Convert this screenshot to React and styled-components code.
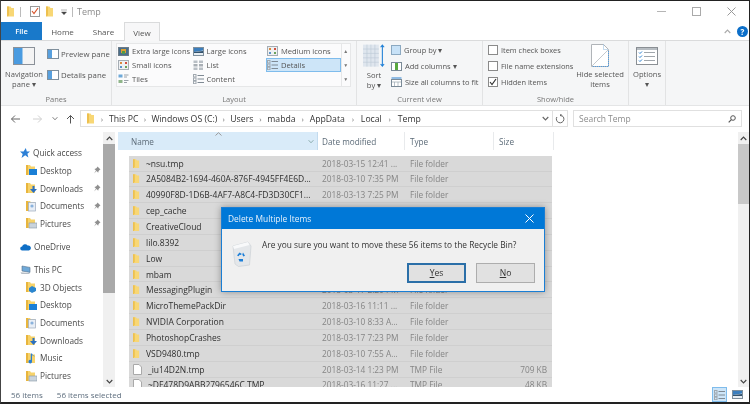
import { Fragment } from "react";
import styled, { createGlobalStyle } from "styled-components";

const GlobalStyle = createGlobalStyle`
  html, body {
    margin: 0;
    padding: 0;
    background: #fff;
  }
  body {
    font-family: "Open Sans", "Noto Sans", sans-serif;
    font-size: 8.5px;
    color: #444;
  }
`;

const Window = styled.div`
  position: relative;
  width: 750px;
  height: 404px;
  box-sizing: border-box;
  border-top: 1px solid #222;
  border-left: 1px solid #444;
  border-right: 1px solid #222;
  border-bottom: 2px solid #222;
  display: flex;
  flex-direction: column;
  overflow: hidden;
  background: #fff;
  filter: blur(0.3px);
`;

/* title bar */
const TitleBar = styled.div`
  height: 21px;
  display: flex;
  align-items: center;
  padding-left: 6px;
  flex: none;
`;

const TitleSep = styled.span`
  width: 1px;
  height: 10px;
  background: #bbb;
  margin: ${(p) => p.$margin};
`;

const QuickSlot = styled.span`
  display: flex;
  margin-left: ${(p) => p.$ml}px;
`;

const TitleText = styled.span`
  font-size: 9px;
  color: #8c8c8c;
`;

const WindowControls = styled.div`
  margin-left: auto;
  display: flex;
  align-items: center;
  gap: 26px;
  padding-right: 13px;
`;

/* tabs */
const TabRow = styled.div`
  height: 18px;
  display: flex;
  align-items: stretch;
  flex: none;
  position: relative;
`;

const FileTab = styled.div`
  width: 41px;
  background: #1979ca;
  color: #fff;
  display: flex;
  align-items: center;
  justify-content: center;
  font-weight: 600;
  font-size: 7.5px;
`;

const Tab = styled.div`
  width: ${(p) => p.$w}px;
  display: flex;
  align-items: center;
  justify-content: center;
  color: #555;
  font-size: 8px;
  box-sizing: border-box;
  ${(p) =>
    p.$active &&
    `
    background: #f7f7f8;
    border: 1px solid #dadbdc;
    border-bottom: none;
    margin-bottom: -1px;
    z-index: 1;
  `}
`;

const TabRight = styled.div`
  margin-left: auto;
  display: flex;
  align-items: center;
  gap: 6px;
  padding-right: 1px;
`;

const HelpDot = styled.span`
  width: 11px;
  height: 11px;
  border-radius: 50%;
  background: #0c6fc9;
  color: #fff;
  font-size: 8px;
  font-weight: 700;
  display: flex;
  align-items: center;
  justify-content: center;
`;

/* ribbon */
const Ribbon = styled.div`
  height: 66px;
  flex: none;
  display: flex;
  background: #f5f6f7;
  border-top: 1px solid #dadbdc;
  border-bottom: 1px solid #e4e5e6;
  box-sizing: border-box;
`;

const Group = styled.div`
  width: ${(p) => p.$w}px;
  flex: none;
  box-sizing: border-box;
  border-right: 1px solid #e2e3e4;
  display: flex;
  flex-direction: column;
`;

const GroupBody = styled.div`
  height: 52px;
  display: flex;
  padding: ${(p) => p.$pad || "0"};
  box-sizing: border-box;
`;

const GroupLabel = styled.div`
  text-align: center;
  font-size: 7.5px;
  color: #777;
  line-height: 12px;
`;

const BigButton = styled.div`
  width: ${(p) => p.$w}px;
  display: flex;
  flex-direction: column;
  align-items: center;
  font-size: 7.6px;
  line-height: 10px;
  text-align: center;
  color: #555;
  flex: none;
  padding-top: ${(p) => p.$top || 6}px;
  box-sizing: border-box;
  white-space: nowrap;

  svg {
    margin-bottom: ${(p) => p.$gap ?? 4}px;
  }
`;

const SmallStack = styled.div`
  width: ${(p) => (p.$w ? `${p.$w}px` : "auto")};
  flex: none;
  display: flex;
  flex-direction: column;
  gap: ${(p) => p.$gap}px;
  padding-top: ${(p) => p.$top}px;
`;

const SmallItem = styled.div`
  display: flex;
  align-items: center;
  gap: ${(p) => p.$gap ?? 3}px;
  height: 12px;
  white-space: nowrap;
  font-size: ${(p) => p.$size || 7.8}px;
  color: #555;
`;

const Gallery = styled.div`
  width: 235px;
  height: 44px;
  margin: 2px 0 0 4px;
  display: flex;
  background: #fbfbfc;
  border: 1px solid #e6e7e8;
  box-sizing: border-box;
`;

const GalleryGrid = styled.div`
  flex: 1;
  display: grid;
  grid-template-columns: 74.5px 74.5px 74.5px;
  grid-auto-rows: 14px;
`;

const GalleryItem = styled.div`
  display: flex;
  align-items: center;
  gap: 3px;
  padding-left: 1px;
  font-size: 7.6px;
  color: #555;
  white-space: nowrap;
  box-sizing: border-box;
  ${(p) => p.$active && `background: #cde5f8; border: 1px solid #7fbcec; padding-left: 0;`}
`;

const GalleryScroll = styled.div`
  width: 9px;
  border-left: 1px solid #e6e7e8;
  color: #777;
  font-size: 5px;
  display: flex;
  flex-direction: column;
  align-items: center;
  justify-content: space-around;
`;

const Check = styled.span`
  width: 8px;
  height: 8px;
  border: 1px solid #8a8a8a;
  background: #fff;
  display: inline-flex;
  align-items: center;
  justify-content: center;
`;

/* address */
const AddressBar = styled.div`
  height: 26px;
  flex: none;
  display: flex;
  align-items: center;
  padding: 0 0 1px 9px;
  box-sizing: border-box;
`;

const NavArrows = styled.div`
  width: 70px;
  flex: none;
  display: flex;
  align-items: center;
`;

const NavSlot = styled.span`
  display: flex;
  margin-left: ${(p) => p.$ml || 0}px;
`;

const AddressBox = styled.div`
  width: 473px;
  height: 17px;
  flex: none;
  display: flex;
  align-items: center;
  padding: 0 3px 0 6px;
  box-sizing: border-box;
  border: 1px solid #e0e0e0;
  color: #333;
  font-size: 8.7px;
`;

const Crumb = styled.span`
  white-space: nowrap;
`;

const CrumbArrow = styled.span`
  width: ${(p) => p.$w}px;
  flex: none;
  color: #777;
  font-size: 8px;
  text-align: center;
`;

const AddressEnd = styled.span`
  margin-left: auto;
  display: flex;
  align-items: center;
`;

const RefreshBox = styled.div`
  width: 15px;
  height: 17px;
  flex: none;
  box-sizing: border-box;
  border: 1px solid #e0e0e0;
  border-left: none;
  display: flex;
  align-items: center;
  justify-content: center;
`;

const SearchBox = styled.div`
  width: 169px;
  height: 17px;
  margin-left: 5px;
  border: 1px solid #e0e0e0;
  box-sizing: border-box;
  display: flex;
  align-items: center;
  justify-content: space-between;
  padding: 0 5px;
  color: #8c8c8c;
  font-size: 8.5px;
  flex: none;
`;

/* main */
const Main = styled.div`
  flex: 1;
  min-height: 0;
  display: flex;
`;

const NavPane = styled.div`
  width: 102px;
  flex: none;
  padding-top: 12px;
  box-sizing: border-box;
  overflow: hidden;
`;

const NavItem = styled.div`
  height: 17.65px;
  display: flex;
  align-items: center;
  padding-left: ${(p) => (p.$top ? 19 : 25)}px;
  gap: ${(p) => (p.$top ? 3 : 3)}px;
  margin-top: ${(p) => p.$space || 0}px;
  font-size: 8.25px;
  color: #4a4a4a;
  white-space: nowrap;

  svg:last-child:not(:first-child) {
    margin-left: auto;
    margin-right: 2px;
  }
`;

const Scrollbar = styled.div`
  width: ${(p) => p.$w}px;
  flex: none;
  background: #f0f0f0;
  display: flex;
  flex-direction: column;
  align-items: center;
`;

const ScrollArrow = styled.div`
  height: 12px;
  flex: none;
  display: flex;
  align-items: center;
  justify-content: center;
  margin-top: ${(p) => (p.$bottom ? "auto" : 0)};
`;

const ScrollThumb = styled.div`
  width: 100%;
  height: ${(p) => p.$h}px;
  background: ${(p) => p.$color};
  flex: none;
`;

const Content = styled.div`
  flex: 1;
  min-width: 0;
  display: flex;
  flex-direction: column;
  padding-left: 3px;
  overflow: hidden;
`;

const HeaderRow = styled.div`
  height: 18px;
  flex: none;
  display: flex;
  position: relative;
`;

const HeaderCell = styled.div`
  width: ${(p) => p.$w}px;
  flex: none;
  box-sizing: border-box;
  display: flex;
  align-items: center;
  padding-left: ${(p) => p.$pad}px;
  font-size: 8.2px;
  color: #5c6b78;
  border-right: 1px solid #e8eaec;
  ${(p) => p.$active && `background: #d9ebf9; border-right: 1px solid #c3dbee;`}
`;

const HeaderDrop = styled.span`
  margin-left: auto;
  padding-right: 3px;
  display: flex;
`;

const SortCaret = styled.span`
  position: absolute;
  left: 97px;
  top: 0;
  line-height: 0;
`;

const Rows = styled.div`
  flex: 1;
  min-height: 0;
  overflow: hidden;
  margin: 5.7px 0 0 11px;
  width: 423px;
`;

const Row = styled.div`
  height: 15.85px;
  box-sizing: border-box;
  display: grid;
  grid-template-columns: 189px 88px 1fr auto;
  align-items: center;
  background: #d9d9d9;
  border-bottom: 1px solid #cfcfcf;
  padding: 0 5px 0 4px;
  font-size: 8.5px;
  white-space: nowrap;
`;

const NameCell = styled.div`
  display: flex;
  align-items: center;
  gap: 6px;
  color: #2f2f2f;
`;

const MutedCell = styled.div`
  color: #858585;
  font-size: 8.3px;
`;

/* status */
const StatusBar = styled.div`
  height: 15px;
  flex: none;
  display: flex;
  align-items: center;
  padding-left: 10px;
  font-size: 8px;
  color: #5f6f7f;
`;

const StatusItem = styled.span`
  margin-right: ${(p) => p.$gap || 0}px;
`;

const ViewSwitch = styled.div`
  margin-left: auto;
  display: flex;
  align-items: center;
  gap: 3px;
  padding-right: 4px;
`;

const ViewButton = styled.span`
  width: 15px;
  height: 15px;
  box-sizing: border-box;
  display: flex;
  align-items: center;
  justify-content: center;
  ${(p) => p.$active && `background: #cde5f8; border: 1px solid #7fbcec;`}
`;

/* dialog */
const Dialog = styled.div`
  position: absolute;
  left: 220px;
  top: 206px;
  width: 324px;
  height: 85px;
  box-sizing: border-box;
  border: 1px solid #1a7ed4;
  background: #f0f0f0;
  box-shadow: 0 0 7px rgba(0, 0, 0, 0.35);
  display: flex;
  flex-direction: column;
`;

const DialogTitle = styled.div`
  height: 21px;
  flex: none;
  background: #0078d7;
  color: #e6f1fb;
  display: flex;
  align-items: center;
  justify-content: space-between;
  padding: 0 10px 0 6px;
  font-size: 8.4px;
`;

const DialogBody = styled.div`
  height: 34px;
  flex: none;
  box-sizing: border-box;
  display: flex;
  padding: 6px 0 0 10px;
  gap: 10px;
  color: #333;
  font-size: 8.35px;
  line-height: 20px;
  white-space: nowrap;

  svg {
    margin-top: 6px;
    flex: none;
  }
`;

const DialogActions = styled.div`
  display: flex;
  justify-content: flex-end;
  gap: 10px;
  padding-right: 9px;
`;

const DialogButton = styled.div`
  width: 59px;
  height: 20px;
  box-sizing: border-box;
  background: #e1e1e1;
  display: flex;
  align-items: center;
  justify-content: center;
  color: #333;
  font-size: 8.6px;
  border: ${(p) => (p.$primary ? "2px solid #2b6fa8" : "1px solid #adadad")};

  u {
    text-underline-offset: 1px;
  }
`;

/* icons */
const Folder = ({ w = 7, h = 11 }) => (
  <svg width={w} height={h} viewBox="0 0 8 11">
    <path d="M0 0.5h3.5l1 1.5H7v8.5H1z" fill="#f8d775" />
    <path d="M0 0.5h2V9l-1 1.5H0z" fill="#edc04f" />
  </svg>
);

const FileIcon = () => (
  <svg width="9" height="11" viewBox="0 0 9 11">
    <path d="M0.5 0.5h5.5l2.5 2.5v7.5h-8z" fill="#fff" stroke="#a9a9a9" />
  </svg>
);

const NavFolder = ({ badge }) => (
  <svg width="11" height="12" viewBox="0 0 11 12">
    <path d="M0 1h4l1 1.5h4V11H0z" fill="#f6d26a" />
    <path d="M0 1h2v10H0z" fill="#e8b53d" />
    {badge === "desktop" && <rect x="3" y="5" width="8" height="6" fill="#1a7fd6" />}
    {badge === "down" && <path d="M6.5 4v3H4l3.5 4 3.5-4H8.5V4z" fill="#2a6fc0" />}
    {badge === "doc" && <rect x="2.5" y="2.5" width="7" height="8.5" fill="#e8eef6" stroke="#9aa9bb" strokeWidth="0.7" />}
    {badge === "doc" && <circle cx="6" cy="6" r="1.6" fill="#8ab2dc" />}
    {badge === "pic" && <rect x="3" y="6" width="8" height="5" fill="#c9d3dc" stroke="#8596a6" strokeWidth="0.6" />}
    {badge === "3d" && <path d="M6 5l4 2v3l-4 2-3-2V7z" fill="#2a86d0" />}
    {badge === "music" && <path d="M6 3v6.5a1.8 1.8 0 1 1-1.2-1.6V1.5h1.2c.3 1.5 2 2 3 3.2-1-.5-2-1-3-1.7z" fill="#2a7fd2" />}
  </svg>
);

const Pin = () => (
  <svg width="8" height="8" viewBox="0 0 8 8">
    <path d="M4.5 0.5l3 3-1 .6-1 1.2-.3 1.5L3.6 5 1 7.5 3 4.4 1.4 3 3 2.6l1-1z" fill="#8f8f8f" />
  </svg>
);

const Star = () => (
  <svg width="10" height="10" viewBox="0 0 10 10">
    <path d="M5.8 0l1 3.5H10L7.4 5.7l1 3.8L5.2 7.3 1.5 10l1.2-4L0 3.6h3.6z" fill="#2b7fd6" />
  </svg>
);

const Cloud = () => (
  <svg width="11" height="8" viewBox="0 0 11 8">
    <path d="M2.3 7.5a2 2 0 0 1-.2-4A3 3 0 0 1 7.6 2.6 2.5 2.5 0 0 1 9 7.5z" fill="#0f6fc6" />
  </svg>
);

const Pc = () => (
  <svg width="11" height="10" viewBox="0 0 11 10">
    <path d="M2 1l8 1.4v5L2 6z" fill="#6fa9d8" stroke="#55708a" strokeWidth="0.6" />
    <path d="M0.5 7.2l8.5.8 1 1H1.5z" fill="#b7bec6" />
  </svg>
);

const Chevron = ({ up, color = "#555", w = 7 }) => (
  <svg width={w} height="5" viewBox="0 0 7 5">
    <path d={up ? "M0.7 4L3.5 1l2.8 3" : "M0.7 1L3.5 4l2.8-3"} fill="none" stroke={color} strokeWidth="1.1" />
  </svg>
);

const Arrow = ({ dir, color }) => (
  <svg width="11" height="10" viewBox="0 0 11 10">
    {dir === "left" && <path d="M10 5H1.5M5 1.5L1.5 5 5 8.5" fill="none" stroke={color} strokeWidth="1" />}
    {dir === "right" && <path d="M1 5h8.5M6 1.5L9.5 5 6 8.5" fill="none" stroke={color} strokeWidth="1" />}
    {dir === "up" && <path d="M5.5 9.5V1.5M2 5l3.5-3.5L9 5" fill="none" stroke={color} strokeWidth="1" />}
  </svg>
);

const GalleryIcon = ({ kind }) => {
  if (kind === "xl") {
    return (
      <svg width="11" height="9" viewBox="0 0 11 9">
        <rect x="0.5" y="0.5" width="10" height="8" fill="#4a6f8c" stroke="#6b7b88" />
        <rect x="3" y="2" width="5" height="4" fill="#e0a030" />
        <rect x="4" y="4" width="3" height="3" fill="#4f9a4a" />
      </svg>
    );
  }
  if (kind === "lg") {
    return (
      <svg width="11" height="9" viewBox="0 0 11 9">
        <rect x="0.5" y="0.5" width="10" height="8" fill="#e8eef3" stroke="#7f8f9c" />
        <path d="M1 1h9v2.5L1 5z" fill="#3b7ebd" />
        <path d="M1 5l9-1v2H1z" fill="#33526c" />
      </svg>
    );
  }
  if (kind === "grid" || kind === "md") {
    return (
      <svg width="11" height="10" viewBox="0 0 11 10">
        <rect x="0.5" y="0.5" width="10" height="9" fill="#eef0f2" stroke="#a5adb4" />
        <rect x="2" y="2" width="2" height="2" fill="#d9893f" />
        <rect x="7" y="2" width="2" height="2" fill="#d14f3f" />
        <rect x="2" y="6" width="2" height="2" fill="#5b93c9" />
        <rect x="7" y="6" width="2" height="2" fill="#6aa35a" />
      </svg>
    );
  }
  if (kind === "list") {
    return (
      <svg width="11" height="10" viewBox="0 0 11 10">
        <rect x="0.5" y="0.5" width="4" height="2.5" fill="#b9bfc5" />
        <rect x="6" y="0.5" width="4" height="2.5" fill="#b9bfc5" />
        <rect x="0.5" y="4" width="4" height="2.5" fill="#a9afb5" />
        <rect x="6" y="4" width="4" height="2.5" fill="#a9afb5" />
        <rect x="0.5" y="7.5" width="4" height="2.5" fill="#b9bfc5" />
        <rect x="6" y="7.5" width="4" height="2.5" fill="#b9bfc5" />
      </svg>
    );
  }
  if (kind === "tiles") {
    return (
      <svg width="11" height="10" viewBox="0 0 11 10">
        <rect x="0.5" y="0.5" width="4" height="3" fill="#6fa9d8" />
        <rect x="0.5" y="6" width="4" height="3" fill="#8fb58a" />
        <path d="M6 1h4.5M6 3h3M6 6.5h4.5M6 8.5h3" stroke="#9aa2a9" />
      </svg>
    );
  }
  return (
    <svg width="11" height="10" viewBox="0 0 11 10">
      <rect x="0.5" y="0.5" width="2.5" height="2.5" fill="none" stroke="#a0a8af" />
      <rect x="0.5" y="4" width="2.5" height="2.5" fill="none" stroke="#a0a8af" />
      <rect x="0.5" y="7.2" width="2.5" height="2.5" fill="none" stroke="#a0a8af" />
      <path d="M4.5 1.5H11M4.5 5H11M4.5 8.5H11" stroke="#7f8a94" />
    </svg>
  );
};

const PaneIcon = () => (
  <svg width="12" height="10" viewBox="0 0 12 10">
    <rect x="0.5" y="0.5" width="11" height="9" fill="#fff" stroke="#7f8f9c" />
    <rect x="1" y="1" width="4" height="8" fill="#58a0de" />
  </svg>
);

const RecycleBin = () => (
  <svg width="20" height="26" viewBox="0 0 20 26">
    <path d="M1 5l15-4 3 4-1.5 19-11 1.5L3 23z" fill="#e4e7ea" stroke="#ccd1d6" strokeWidth="0.7" />
    <path d="M1 5l15-4 1.5 3L2 8z" fill="#f8f9fa" />
    <path d="M5 14.5l2.5-3 2.4 1.6-1.4 1-.9-.4-.9 1.6zM11 11.5l2 3.3-1.7.7-1-2zM6.5 18h4.5v2.5H7.5z" fill="#1c7fd8" />
  </svg>
);

const fileRows = [
  ["folder", "~nsu.tmp", "2018-03-15 12:41 ...", "File folder", ""],
  ["folder", "2A5084B2-1694-460A-876F-4945FF4E6D...", "2018-03-10 7:35 PM", "File folder", ""],
  ["folder", "40990F8D-1D6B-4AF7-A8C4-FD3D30CF1...", "2018-03-13 7:25 PM", "File folder", ""],
  ["folder", "cep_cache", "", "", ""],
  ["folder", "CreativeCloud", "", "", ""],
  ["folder", "lilo.8392", "", "", ""],
  ["folder", "Low", "", "", ""],
  ["folder", "mbam", "", "", ""],
  ["folder", "MessagingPlugin", "2018-03-17 2:20 PM", "File folder", ""],
  ["folder", "MicroThemePackDir", "2018-03-16 11:11 ...", "File folder", ""],
  ["folder", "NVIDIA Corporation", "2018-03-10 8:33 A...", "File folder", ""],
  ["folder", "PhotoshopCrashes", "2018-03-17 7:23 PM", "File folder", ""],
  ["folder", "VSD9480.tmp", "2018-03-10 7:55 A...", "File folder", ""],
  ["file", "_iu14D2N.tmp", "2018-03-14 1:23 PM", "TMP File", "709 KB"],
  ["file", "~DF478D9ABB2796546C.TMP", "2018-03-16 11:27 ...", "TMP File", "48 KB"],
];

const navItems = [
  { label: "Quick access", icon: <Star />, top: true },
  { label: "Desktop", icon: <NavFolder badge="desktop" />, pin: true },
  { label: "Downloads", icon: <NavFolder badge="down" />, pin: true },
  { label: "Documents", icon: <NavFolder badge="doc" />, pin: true },
  { label: "Pictures", icon: <NavFolder badge="pic" />, pin: true },
  { label: "OneDrive", icon: <Cloud />, top: true, space: 5.5 },
  { label: "This PC", icon: <Pc />, top: true, space: 5.5 },
  { label: "3D Objects", icon: <NavFolder badge="3d" /> },
  { label: "Desktop", icon: <NavFolder badge="desktop" /> },
  { label: "Documents", icon: <NavFolder badge="doc" /> },
  { label: "Downloads", icon: <NavFolder badge="down" /> },
  { label: "Music", icon: <NavFolder badge="music" /> },
  { label: "Pictures", icon: <NavFolder badge="pic" /> },
];

const galleryItems = [
  ["xl", "Extra large icons"],
  ["lg", "Large icons"],
  ["md", "Medium icons"],
  ["grid", "Small icons"],
  ["list", "List"],
  ["details", "Details"],
  ["tiles", "Tiles"],
  ["content", "Content"],
];

const crumbs = [
  ["This PC", 13],
  ["Windows OS (C:)", 13],
  ["Users", 14],
  ["mabda", 14],
  ["AppData", 16],
  ["Local", 16],
  ["Temp", 0],
];

function App() {
  return (
    <>
      <GlobalStyle />
      <Window>
        <TitleBar>
          <Folder w={8} />
          <TitleSep $margin="0 9px 0 5px" />
          <svg width="10" height="11" viewBox="0 0 10 11">
            <rect x="0.5" y="0.5" width="9" height="10" fill="#fff" stroke="#9a9a9a" />
            <path d="M2 5l2 2.5L8 2" fill="none" stroke="#d9542b" strokeWidth="1.2" />
          </svg>
          <QuickSlot $ml={6}><Folder w={8} /></QuickSlot>
          <QuickSlot $ml={7}>
            <svg width="6" height="6" viewBox="0 0 6 6">
              <path d="M0 1h6M0.5 3h5L3 5.8z" fill="#444" stroke="#444" strokeWidth="0.4" />
            </svg>
          </QuickSlot>
          <TitleSep $margin="0 4px 0 5px" />
          <TitleText>Temp</TitleText>
          <WindowControls>
            <svg width="9" height="9" viewBox="0 0 9 9">
              <path d="M0 4.5h9" stroke="#b5b5b5" />
            </svg>
            <svg width="9" height="9" viewBox="0 0 9 9">
              <rect x="0.5" y="0.5" width="8" height="8" fill="none" stroke="#aaa" />
            </svg>
            <svg width="9" height="9" viewBox="0 0 9 9">
              <path d="M0.5 0.5l8 8M8.5 0.5l-8 8" stroke="#999" />
            </svg>
          </WindowControls>
        </TitleBar>

        <TabRow>
          <FileTab>File</FileTab>
          <Tab $w={41}>Home</Tab>
          <Tab $w={41}>Share</Tab>
          <Tab $w={36} $active>View</Tab>
          <TabRight>
            <Chevron up color="#aaa" />
            <HelpDot>?</HelpDot>
          </TabRight>
        </TabRow>

        <Ribbon>
          <Group $w={111}>
            <GroupBody>
              <BigButton $w={46} $top={6}>
                <svg width="22" height="18" viewBox="0 0 22 18">
                  <rect x="0.5" y="0.5" width="21" height="17" fill="#f4f4f4" stroke="#8b9199" />
                  <rect x="1" y="1" width="8.5" height="16" fill="#4a9be0" />
                </svg>
                <span>Navigation</span>
                <span>pane ▾</span>
              </BigButton>
              <SmallStack $gap={9} $top={7}>
                <SmallItem $gap={2}><PaneIcon />Preview pane</SmallItem>
                <SmallItem $gap={2}><PaneIcon />Details pane</SmallItem>
              </SmallStack>
            </GroupBody>
            <GroupLabel>Panes</GroupLabel>
          </Group>

          <Group $w={245}>
            <GroupBody>
              <Gallery>
                <GalleryGrid>
                  {galleryItems.map(([kind, label]) => (
                    <GalleryItem key={label} $active={label === "Details"}>
                      <GalleryIcon kind={kind} />
                      {label}
                    </GalleryItem>
                  ))}
                </GalleryGrid>
                <GalleryScroll>
                  <span>▲</span>
                  <span>▼</span>
                  <span>▼</span>
                </GalleryScroll>
              </Gallery>
            </GroupBody>
            <GroupLabel>Layout</GroupLabel>
          </Group>

          <Group $w={126}>
            <GroupBody>
              <BigButton $w={34} $top={3} $gap={1}>
                <svg width="22" height="25" viewBox="0 0 25 27">
                  <rect x="0" y="0" width="18" height="25" fill="#dfe6ee" />
                  <path d="M0 5h18M0 10h18M0 15h18M0 20h18M4.5 0v25M9 0v25M13.5 0v25" stroke="#bcc9d6" strokeWidth="0.7" />
                  <path d="M22 1v23M20 3l2-2.4L24 3M20 22l2 2.4 2-2.4" fill="none" stroke="#1f7fd6" strokeWidth="1.2" />
                </svg>
                <span>Sort</span>
                <span>by ▾</span>
              </BigButton>
              <SmallStack $gap={4} $top={3}>
                <SmallItem $size={7.5}>
                  <svg width="10" height="10" viewBox="0 0 10 10">
                    <rect x="0.5" y="0.5" width="9" height="9" fill="#c8e2f7" stroke="#8ca9c1" />
                  </svg>
                  Group by ▾
                </SmallItem>
                <SmallItem $size={7.5}>
                  <svg width="11" height="10" viewBox="0 0 11 10">
                    <rect x="0.5" y="1.5" width="10" height="8" fill="#fff" stroke="#7a8a97" />
                    <rect x="4" y="2" width="3" height="7" fill="#5aa83f" />
                  </svg>
                  Add columns ▾
                </SmallItem>
                <SmallItem $size={7.5}>
                  <svg width="11" height="10" viewBox="0 0 11 10">
                    <rect x="0.5" y="2.5" width="10" height="7" fill="#fff" stroke="#7a8a97" />
                    <path d="M0.5 1h10" stroke="#2a80d0" />
                    <path d="M3.5 5v4M7 5v4M1 5h9" stroke="#9aa6b0" strokeWidth="0.7" />
                  </svg>
                  Size all columns to fit
                </SmallItem>
              </SmallStack>
            </GroupBody>
            <GroupLabel>Current view</GroupLabel>
          </Group>

          <Group $w={146}>
            <GroupBody $pad="0 0 0 5px">
              <SmallStack $w={86} $gap={4} $top={3}>
                <SmallItem $size={7.4}><Check />Item check boxes</SmallItem>
                <SmallItem $size={7.4}><Check />File name extensions</SmallItem>
                <SmallItem $size={7.4}>
                  <Check>
                    <svg width="8" height="8" viewBox="0 0 8 8">
                      <path d="M1 4l2 2.5L7 1" fill="none" stroke="#333" strokeWidth="1.2" />
                    </svg>
                  </Check>
                  Hidden items
                </SmallItem>
              </SmallStack>
              <BigButton $w={52} $top={3} $gap={2}>
                <svg width="18" height="23" viewBox="0 0 18 23">
                  <path d="M0.5 0.5h12l5 5v17h-17z" fill="#fff" stroke="#b0b4b8" />
                  <path d="M12.5 0.5v5h5" fill="none" stroke="#8fb8dc" strokeDasharray="1 1" />
                  <path d="M0.5 22.5L17 6" stroke="#c4c8cc" />
                  <path d="M17.5 7v15.5H2" fill="none" stroke="#4f9be0" strokeDasharray="1 1" />
                </svg>
                <span>Hide selected</span>
                <span>items</span>
              </BigButton>
            </GroupBody>
            <GroupLabel>Show/hide</GroupLabel>
          </Group>

          <Group $w={37}>
            <GroupBody>
              <BigButton $w={36} $top={6}>
                <svg width="22" height="18" viewBox="0 0 22 18">
                  <rect x="0.5" y="0.5" width="21" height="17" fill="#fff" stroke="#8a8f94" />
                  <path d="M0.5 2h21" stroke="#6f7a84" />
                  <path d="M3 5.5l1 1 2-2M3 9.5l1 1 2-2M3 13.5l1 1 2-2" fill="none" stroke="#2a80d0" />
                  <path d="M8 5.5h11M8 9.5h11M8 13.5h11" stroke="#a0a6ac" />
                </svg>
                <span>Options</span>
                <span>▾</span>
              </BigButton>
            </GroupBody>
          </Group>
        </Ribbon>

        <AddressBar>
          <NavArrows>
            <Arrow dir="left" color="#666" />
            <NavSlot $ml={11}><Arrow dir="right" color="#d0d0d0" /></NavSlot>
            <NavSlot $ml={9}><Chevron color="#777" w={6} /></NavSlot>
            <NavSlot $ml={7}><Arrow dir="up" color="#555" /></NavSlot>
          </NavArrows>
          <AddressBox>
            <Folder w={8} />
            <CrumbArrow $w={14}>›</CrumbArrow>
            {crumbs.map(([label, w]) => (
              <Fragment key={label}>
                <Crumb>{label}</Crumb>
                {w > 0 && <CrumbArrow $w={w}>›</CrumbArrow>}
              </Fragment>
            ))}
            <AddressEnd>
              <Chevron color="#666" />
            </AddressEnd>
          </AddressBox>
          <RefreshBox>
            <svg width="10" height="10" viewBox="0 0 10 10">
              <path d="M5 1.2A3.8 3.8 0 1 1 1.9 3M5 1.2l1.6-1M5 1.2l1.4 1.2" fill="none" stroke="#666" />
            </svg>
          </RefreshBox>
          <SearchBox>
            Search Temp
            <svg width="8" height="8" viewBox="0 0 8 8">
              <circle cx="5" cy="3" r="2.3" fill="none" stroke="#555" />
              <path d="M3.4 4.6L0.7 7.3" stroke="#555" strokeWidth="1.2" />
            </svg>
          </SearchBox>
        </AddressBar>

        <Main>
          <NavPane>
            {navItems.map((item, i) => (
              <NavItem key={i} $top={item.top} $space={item.space}>
                {item.icon}
                <span>{item.label}</span>
                {item.pin && <Pin />}
              </NavItem>
            ))}
          </NavPane>
          <Scrollbar $w={12}>
            <ScrollArrow><Chevron up color="#444" /></ScrollArrow>
            <ScrollThumb $h={149} $color="#a9a9a9" />
            <ScrollArrow $bottom><Chevron color="#444" /></ScrollArrow>
          </Scrollbar>
          <Content>
            <HeaderRow>
              <SortCaret>
                <svg width="7" height="4" viewBox="0 0 7 4">
                  <path d="M0.5 3.5L3.5 0.7l3 2.8" fill="none" stroke="#999" />
                </svg>
              </SortCaret>
              <HeaderCell $w={200} $pad={13} $active>
                Name
                <HeaderDrop><Chevron color="#8aa" w={6} /></HeaderDrop>
              </HeaderCell>
              <HeaderCell $w={87} $pad={4}>Date modified</HeaderCell>
              <HeaderCell $w={89} $pad={5}>Type</HeaderCell>
              <HeaderCell $w={60} $pad={5}>Size</HeaderCell>
            </HeaderRow>
            <Rows>
              {fileRows.map(([kind, name, date, type, size]) => (
                <Row key={name}>
                  <NameCell>
                    {kind === "folder" ? <Folder /> : <FileIcon />}
                    <span>{name}</span>
                  </NameCell>
                  <MutedCell>{date}</MutedCell>
                  <MutedCell>{type}</MutedCell>
                  <MutedCell>{size}</MutedCell>
                </Row>
              ))}
            </Rows>
          </Content>
          <Scrollbar $w={11}>
            <ScrollArrow><Chevron up color="#444" /></ScrollArrow>
            <ScrollThumb $h={60} $color="#c8c8c8" />
            <ScrollArrow $bottom><Chevron color="#444" /></ScrollArrow>
          </Scrollbar>
        </Main>

        <StatusBar>
          <StatusItem $gap={14}>56 items</StatusItem>
          <StatusItem>56 items selected</StatusItem>
          <ViewSwitch>
            <ViewButton $active><GalleryIcon kind="details" /></ViewButton>
            <ViewButton><GalleryIcon kind="lg" /></ViewButton>
          </ViewSwitch>
        </StatusBar>

        <Dialog>
          <DialogTitle>
            Delete Multiple Items
            <svg width="9" height="9" viewBox="0 0 9 9">
              <path d="M0.5 0.5l8 8M8.5 0.5l-8 8" stroke="#fff" />
            </svg>
          </DialogTitle>
          <DialogBody>
            <RecycleBin />
            <span>Are you sure you want to move these 56 items to the Recycle Bin?</span>
          </DialogBody>
          <DialogActions>
            <DialogButton $primary><span><u>Y</u>es</span></DialogButton>
            <DialogButton><span><u>N</u>o</span></DialogButton>
          </DialogActions>
        </Dialog>
      </Window>
    </>
  );
}

export default App;
